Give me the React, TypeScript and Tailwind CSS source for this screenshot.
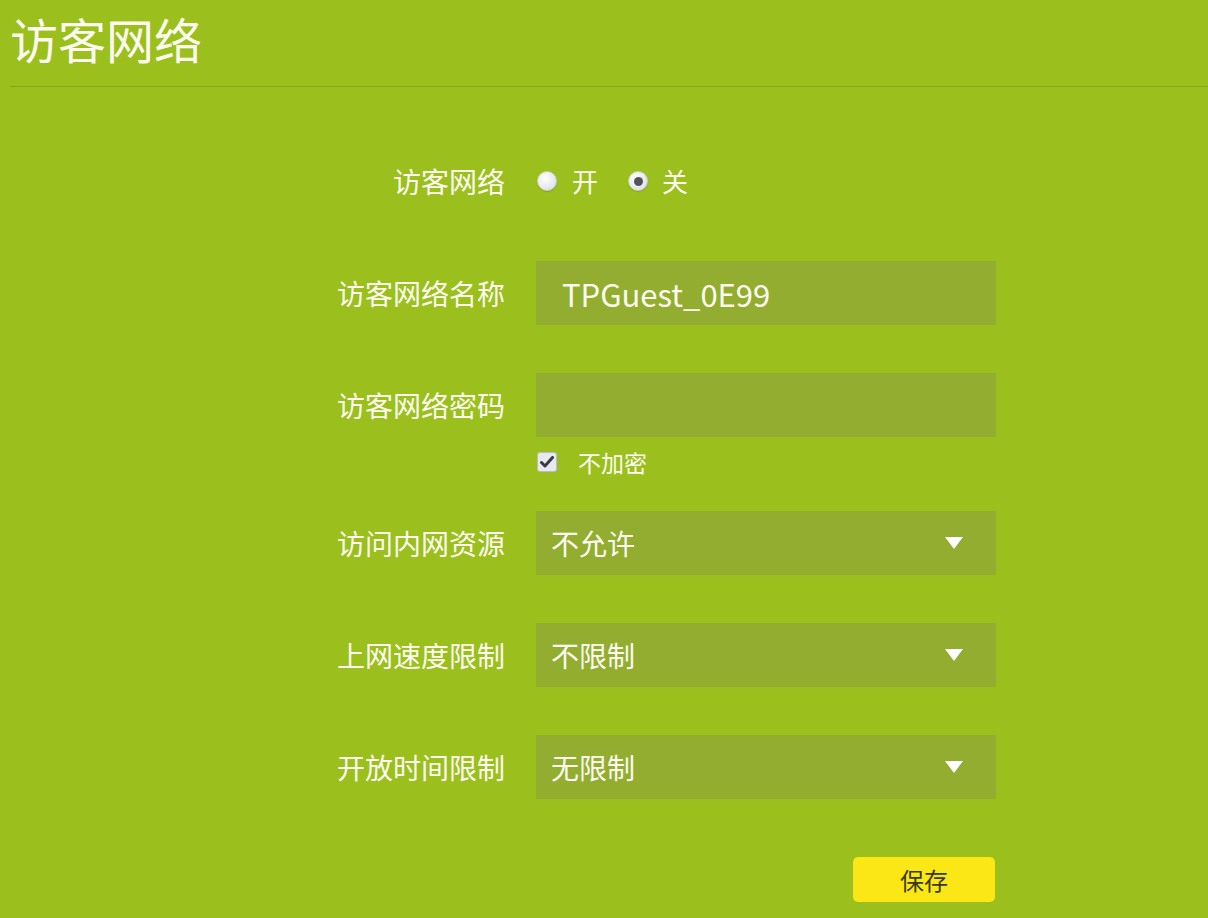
import React from "react";

const font = { fontFamily: '"Noto Sans CJK SC", "Noto Sans", sans-serif' };

function Arrow() {
  return (
    <svg width="18" height="12" viewBox="0 0 18 12" className="shrink-0">
      <polygon points="0,0 18,0 9,12" fill="#ffffff" />
    </svg>
  );
}

function Label({ children }: { children: React.ReactNode }) {
  return (
    <div className="w-[505px] shrink-0 text-right text-[28px] leading-none text-[#fbfbf0]">
      {children}
    </div>
  );
}

function Select({ value }: { value: string }) {
  return (
    <div className="ml-[31px] flex h-[64px] w-[460px] items-center justify-between bg-[#93ad30] pl-[15px] pr-[33px] text-[28px] leading-none text-[#fbfbf0]">
      <span>{value}</span>
      <Arrow />
    </div>
  );
}

export default function App() {
  return (
    <div
      className="h-[918px] w-[1208px] overflow-hidden bg-[#9bbf1d]"
      style={font}
    >
      <div className="flex h-[86px] items-center pb-[10px] pl-[10px]">
        <h1 className="text-[48px] font-normal leading-none text-[#fbfbf0]">访客网络</h1>
      </div>
      <div className="ml-[10px] h-px bg-[#86a51a]" />

      <div className="flex flex-col">
        <div className="mt-[62px] flex h-[64px] items-center">
          <Label>访客网络</Label>
          <div className="ml-[32px] flex items-center text-[26px] leading-none text-[#fbfbf0]">
            <span className="block h-[20px] w-[20px] shrink-0 rounded-full border border-[#c8cfc0] bg-[radial-gradient(circle_at_40%_35%,#ffffff,#d8d9e3)] shadow-[0_1px_1px_rgba(0,0,0,0.15)]" />
            <span className="ml-[15px]">开</span>
            <span className="ml-[30px] flex h-[20px] w-[20px] shrink-0 items-center justify-center rounded-full border border-[#c8cfc0] bg-[radial-gradient(circle_at_40%_35%,#ffffff,#d8d9e3)] shadow-[0_1px_1px_rgba(0,0,0,0.15)]">
              <span className="block h-[9px] w-[9px] rounded-full bg-[#55525e]" />
            </span>
            <span className="ml-[14px]">关</span>
          </div>
        </div>

        <div className="mt-[48px] flex h-[64px] items-center">
          <Label>访客网络名称</Label>
          <div className="ml-[31px] flex h-[64px] w-[460px] items-center bg-[#93ad30] pl-[26px] text-[31px] leading-none text-[#fbfbf0]">
            TPGuest_0E99
          </div>
        </div>

        <div className="mt-[48px] flex h-[64px] items-center">
          <Label>访客网络密码</Label>
          <div className="ml-[31px] h-[64px] w-[460px] bg-[#93ad30]" />
        </div>

        <div className="mt-[15px] flex h-[20px] items-center pl-[537px]">
          <span className="flex h-[20px] w-[20px] items-center justify-center rounded-[3px] border border-[#b9bcc8] bg-[#e8e9f0]">
            <svg width="14" height="12" viewBox="0 0 14 12">
              <path d="M1.5 6.5 L5 10 L12.5 1.5" fill="none" stroke="#3a3846" strokeWidth="3" strokeLinecap="round" strokeLinejoin="round" />
            </svg>
          </span>
          <span className="ml-[21px] text-[23px] leading-none text-[#fbfbf0]">不加密</span>
        </div>

        <div className="mt-[39px] flex h-[64px] items-center">
          <Label>访问内网资源</Label>
          <Select value="不允许" />
        </div>

        <div className="mt-[48px] flex h-[64px] items-center">
          <Label>上网速度限制</Label>
          <Select value="不限制" />
        </div>

        <div className="mt-[48px] flex h-[64px] items-center">
          <Label>开放时间限制</Label>
          <Select value="无限制" />
        </div>

        <div className="mt-[58px] flex pl-[853px]">
          <button className="flex h-[45px] w-[142px] items-center justify-center rounded-[5px] bg-[#fbe716] text-[24px] leading-none text-[#3a3a12]">
            保存
          </button>
        </div>
      </div>
    </div>
  );
}
